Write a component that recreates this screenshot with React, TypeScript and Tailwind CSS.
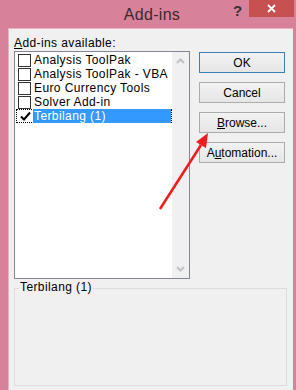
const items = [
  { name: 'Analysis ToolPak', checked: false },
  { name: 'Analysis ToolPak - VBA', checked: false },
  { name: 'Euro Currency Tools', checked: false },
  { name: 'Solver Add-in', checked: false },
  { name: 'Terbilang (1)', checked: true },
];

const Check = () => (
  <svg width="13" height="13" viewBox="0 0 13 13">
    <path d="M2 6.5 L5 9.5 L11 2.5" fill="none" stroke="#000" strokeWidth="2" />
  </svg>
);

const DialogButton = ({
  children,
  primary,
}: {
  children: React.ReactNode;
  primary?: boolean;
}) => (
  <button
    className={
      'w-[86px] h-[21px] text-[12px] tracking-normal text-black bg-gradient-to-b from-[#f2f2f2] to-[#e6e6e6] border ' +
      (primary ? 'border-[#3c7fb1]' : 'border-[#acacac]')
    }
  >
    {children}
  </button>
);

export default function App() {
  return (
    <div
      className="relative w-[296px] h-[390px] overflow-hidden bg-[#d7819a] flex flex-col"
      style={{ fontFamily: '"Liberation Sans", Arial, sans-serif' }}
    >
      {/* title bar */}
      <div className="relative h-[28px] shrink-0 flex justify-center">
        <span className="text-[16px] text-[#3a2a30] mt-[3px] ml-[8px] tracking-[0.3px]">Add-ins</span>
        <span className="absolute left-[233px] top-[0px] text-[15px] font-bold text-[#333]">?</span>
        <div className="absolute left-[249px] top-0 w-[45px] h-[17px] bg-[#c75050] flex items-center justify-center">
          <svg width="9" height="9" viewBox="0 0 9 9">
            <path d="M1 1 L8 8 M8 1 L1 8" stroke="#fff" strokeWidth="1.8" />
          </svg>
        </div>
      </div>

      {/* body */}
      <div className="flex-1 ml-[8px] mr-[3px] bg-[#f0f0f0] border-l border-t border-[#e6b3c1] pl-[5px] pr-[6px] pt-[7px] flex flex-col text-[12px] text-black tracking-[0.4px]">
        <div className="h-[15px] leading-[15px]">
          <span className="underline">A</span>dd-ins available:
        </div>
        <div className="flex">
          <div className="w-[176px] h-[228px] border border-[#828790] bg-white flex">
            <div className="flex-1 pt-[1px] pl-[1px]">
              {items.map((it) =>
                it.checked ? (
                  <div
                    key={it.name}
                    className="h-[14px] flex items-center border border-dotted border-black"
                  >
                    <div className="w-[14px] h-[13px] flex items-center justify-center ml-[1px]">
                      <Check />
                    </div>
                    <div className="h-[14px] leading-[14px] flex-1 bg-[#3399ff] text-white pl-[1px] ml-[1px]">
                      {it.name}
                    </div>
                  </div>
                ) : (
                  <div key={it.name} className="h-[14px] flex items-center pl-[2px]">
                    <div className="w-[13px] h-[13px] border border-[#333] bg-white" />
                    <span className="ml-[3px] leading-[14px]">{it.name}</span>
                  </div>
                )
              )}
            </div>
            <div className="w-[17px] bg-[#f0f0f0] flex flex-col justify-between items-center py-[6px]">
              <svg width="9" height="6" viewBox="0 0 9 6">
                <path d="M1 5 L4.5 1.5 L8 5" fill="none" stroke="#c2c2c2" strokeWidth="2" />
              </svg>
              <svg width="9" height="6" viewBox="0 0 9 6">
                <path d="M1 1 L4.5 4.5 L8 1" fill="none" stroke="#c2c2c2" strokeWidth="2" />
              </svg>
            </div>
          </div>
          <div className="ml-[9px] flex flex-col gap-[9px] pt-[1px]">
            <DialogButton primary>OK</DialogButton>
            <DialogButton>Cancel</DialogButton>
            <DialogButton>
              <span className="underline">B</span>rowse...
            </DialogButton>
            <DialogButton>
              A<span className="underline">u</span>tomation...
            </DialogButton>
          </div>
        </div>
        <div className="relative mt-[9px] h-[98px] border border-[#dcdcdc]">
          <span className="absolute left-[4px] top-[-9px] bg-[#f0f0f0] px-[1px] leading-[15px]">
            Terbilang (1)
          </span>
        </div>
      </div>

      {/* annotation arrow */}
      <svg className="absolute left-0 top-0" width="296" height="390" viewBox="0 0 296 390">
        <line x1="160" y1="209" x2="201" y2="145" stroke="#ee1c1c" strokeWidth="2.5" />
        <path d="M208 133 L196 142 L206 148 Z" fill="#ee1c1c" />
      </svg>
    </div>
  );
}
